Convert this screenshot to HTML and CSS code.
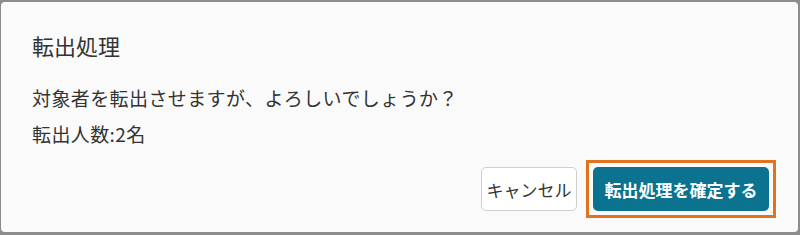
FILE: index.html
```html
<!DOCTYPE html>
<html lang="ja">
<head>
<meta charset="utf-8">
<link rel="stylesheet" href="styles.css">
</head>
<body>
<div class="dialog">
  <h2 class="title">転出処理</h2>
  <div class="content">
    <p class="line">対象者を転出させますが、よろしいでしょうか？</p>
    <p class="line">転出人数:2名</p>
  </div>
  <div class="footer">
    <button class="btn btn-cancel">キャンセル</button>
    <span class="focus-ring"><button class="btn btn-primary">転出処理を確定する</button></span>
  </div>
</div>
</body>
</html>
```
FILE: styles.css
```css
html, body {
  margin: 0;
  padding: 0;
  background: #8c8c8c;
  width: 800px;
  height: 235px;
  overflow: hidden;
}
body {
  font-family: "Noto Sans CJK JP", "Noto Sans", sans-serif;
  color: #333;
}
.dialog {
  margin: 2px 2px 0 1px;
  height: 230px;
  box-sizing: border-box;
  background: #fafafa;
  border-radius: 4px;
  padding: 28px 22px 0 31px;
  display: flex;
  flex-direction: column;
}
.title {
  margin: 0;
  font-size: 22px;
  font-weight: 400;
  line-height: 30px;
}
.content {
  margin-top: 20px;
}
.line {
  margin: 0;
  font-size: 19px;
  letter-spacing: 0.4px;
  line-height: 36px;
}
.footer {
  margin-top: 8px;
  display: flex;
  justify-content: flex-end;
  align-items: center;
  gap: 9px;
}
.btn {
  font-family: inherit;
  font-size: 17px;
  height: 44px;
  border-radius: 5px;
  padding: 0 10px;
  white-space: nowrap;
  cursor: pointer;
  display: block;
}
.btn-cancel {
  background: #fff;
  color: #333;
  border: 1px solid #cfcfcf;
  width: 96px;
  padding: 0;
}
.focus-ring {
  display: block;
  border: 3px solid #e0731e;
  padding: 4px;
}
.btn-primary {
  background: #0b7290;
  color: #fff;
  border: none;
  font-weight: 700;
  width: 176px;
  padding: 0;
}
```
